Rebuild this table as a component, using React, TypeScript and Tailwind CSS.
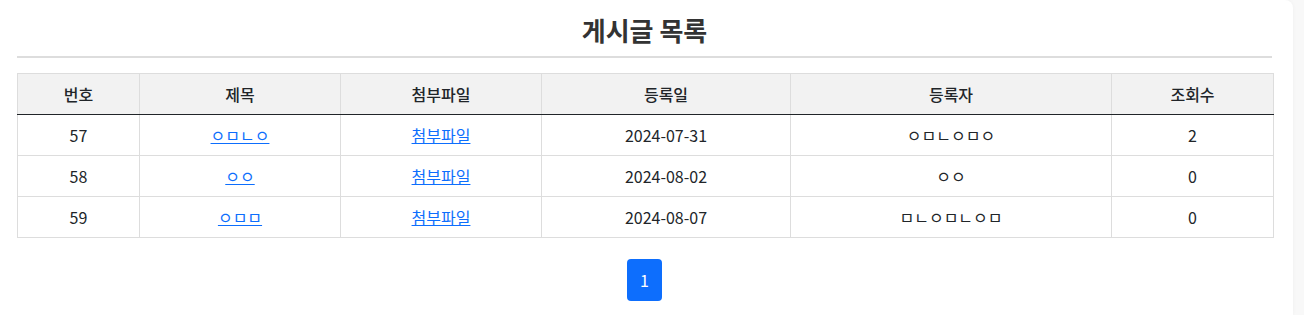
const posts = [
  { id: 57, title: "ㅇㅁㄴㅇ", date: "2024-07-31", writer: "ㅇㅁㄴㅇㅁㅇ", views: 2 },
  { id: 58, title: "ㅇㅇ", date: "2024-08-02", writer: "ㅇㅇ", views: 0 },
  { id: 59, title: "ㅇㅁㅁ", date: "2024-08-07", writer: "ㅁㄴㅇㅁㄴㅇㅁ", views: 0 },
];

const App = () => {
  return (
    <div
      className="min-h-[315px] bg-[#f8f8f8]"
      style={{ fontFamily: '"Noto Sans CJK KR", "Noto Sans", sans-serif' }}
    >
      <div className="w-[1293px] min-h-[315px] bg-white rounded-tr-lg shadow-[0_0_4px_rgba(0,0,0,0.04)] pl-[17px] pr-[21px] pt-[14px]">
        <h2 className="text-center text-[26px] leading-[31px] font-bold text-[#333] pb-[11px] border-b-2 border-[#ddd]">
          게시글 목록
        </h2>
        <table className="mt-[15px] w-full border-collapse table-fixed text-base text-[#212529]">
          <colgroup>
            <col className="w-[122px]" />
            <col className="w-[201px]" />
            <col className="w-[201px]" />
            <col className="w-[249px]" />
            <col className="w-[321px]" />
            <col className="w-[162px]" />
          </colgroup>
          <thead>
            <tr className="bg-[#f2f2f2]">
              {["번호", "제목", "첨부파일", "등록일", "등록자", "조회수"].map((h) => (
                <th
                  key={h}
                  className="border border-[#ddd] border-b-[#212529] py-2 leading-6 font-medium text-center"
                >
                  {h}
                </th>
              ))}
            </tr>
          </thead>
          <tbody>
            {posts.map((p) => (
              <tr key={p.id}>
                <td className="border border-[#ddd] py-2 leading-6 text-center">{p.id}</td>
                <td className="border border-[#ddd] py-2 leading-6 text-center">
                  <a href="#" className="text-[#0d6efd] underline">{p.title}</a>
                </td>
                <td className="border border-[#ddd] py-2 leading-6 text-center">
                  <a href="#" className="text-[#0d6efd] underline">첨부파일</a>
                </td>
                <td className="border border-[#ddd] py-2 leading-6 text-center">{p.date}</td>
                <td className="border border-[#ddd] py-2 leading-6 text-center">{p.writer}</td>
                <td className="border border-[#ddd] py-2 leading-6 text-center">{p.views}</td>
              </tr>
            ))}
          </tbody>
        </table>
        <div className="mt-[21px] flex justify-center">
          <button className="h-[42px] w-[35px] rounded bg-[#0d6efd] text-white text-base leading-6">
            1
          </button>
        </div>
      </div>
    </div>
  );
};

export default App;
